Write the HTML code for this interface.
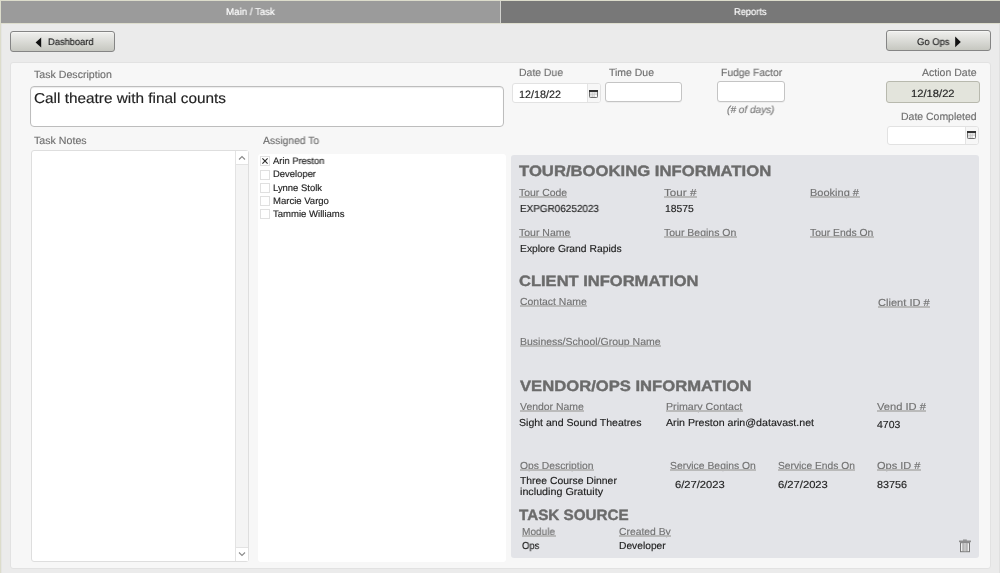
<!DOCTYPE html>
<html><head><meta charset="utf-8"><style>
html,body{margin:0;padding:0;width:1000px;height:573px;overflow:hidden;background:#ebebeb;}
body{position:relative;font-family:"Liberation Sans",sans-serif;}
.r{position:absolute;box-sizing:border-box;}
.t{position:absolute;white-space:nowrap;line-height:1;transform-origin:0 0;will-change:transform;text-rendering:geometricPrecision;}
.ul{position:absolute;height:2px;background:#bababa;}
</style></head><body>
<div class="r" style="left:0px;top:0px;width:1000px;height:573px;background:#ebebeb;"></div>
<div class="r" style="left:0px;top:0px;width:1000px;height:1px;background:#dcdccb;"></div>
<div class="r" style="left:0px;top:0px;width:1px;height:573px;background:#dcdccb;"></div>
<div class="r" style="left:1px;top:1px;width:499px;height:22px;background:#9b9b9b;"></div>
<div class="r" style="left:500px;top:1px;width:1px;height:22px;background:#d2d2ce;"></div>
<div class="r" style="left:501px;top:1px;width:499px;height:22px;background:#787878;"></div>
<div class="r" style="left:0px;top:23px;width:1000px;height:1px;background:#dedece;"></div>
<div class="r" style="left:999px;top:24px;width:1px;height:549px;background:#e0e0e0;"></div>
<div class="r" style="left:1px;top:24px;width:1px;height:549px;background:#e5e5e3;"></div>
<div class="t" id="t0" style="left:226.00px;top:7.91px;font-size:9.88px;color:#ffffff;-webkit-text-stroke:0.15px #ffffff;transform:scaleX(0.9825);">Main / Task</div>
<div class="t" id="t1" style="left:733.80px;top:7.91px;font-size:9.88px;color:#ffffff;-webkit-text-stroke:0.15px #ffffff;transform:scaleX(0.9415);">Reports</div>
<div class="r" style="left:10px;top:31px;width:105px;height:21px;background:linear-gradient(#f0f0ee,#c6c7c0);border:1px solid #858585;border-radius:3px;box-sizing:border-box;box-shadow:inset 0 1px 0 #f6f6f4;"></div>
<div class="r" style="left:886px;top:30px;width:105px;height:21px;background:linear-gradient(#f0f0ee,#c6c7c0);border:1px solid #858585;border-radius:3px;box-sizing:border-box;box-shadow:inset 0 1px 0 #f6f6f4;"></div>
<div class="t" id="t2" style="left:47.60px;top:38.13px;font-size:9.59px;color:#222;-webkit-text-stroke:0.15px #222;transform:scaleX(0.9728);">Dashboard</div>
<div class="t" id="t3" style="left:917.00px;top:38.13px;font-size:9.59px;color:#222;-webkit-text-stroke:0.15px #222;transform:scaleX(0.9818);">Go Ops</div>
<svg class="r" style="left:35px;top:37px" width="7" height="11"><polygon points="6.2,0.6 6.2,10.6 0.6,5.6" fill="#111"/></svg>
<svg class="r" style="left:955px;top:36px" width="7" height="12"><polygon points="0.2,0.6 0.2,11.2 5.8,5.9" fill="#111"/></svg>
<div class="r" style="left:10px;top:62px;width:981px;height:507px;background:#f7f7f7;border:1px solid #e2e2e2;border-radius:3px;box-sizing:border-box;"></div>
<div class="t" id="t4" style="left:34.30px;top:70.87px;font-size:10.47px;color:#6f6f6f;-webkit-text-stroke:0.15px #6f6f6f;transform:scaleX(1.0137);">Task Description</div>
<div class="t" id="t5" style="left:34.30px;top:137.07px;font-size:10.47px;color:#6f6f6f;-webkit-text-stroke:0.15px #6f6f6f;transform:scaleX(1.0164);">Task Notes</div>
<div class="t" id="t6" style="left:262.60px;top:137.07px;font-size:10.47px;color:#6f6f6f;-webkit-text-stroke:0.15px #6f6f6f;transform:scaleX(0.9881);">Assigned To</div>
<div class="t" id="t7" style="left:518.60px;top:68.67px;font-size:10.47px;color:#6f6f6f;-webkit-text-stroke:0.15px #6f6f6f;transform:scaleX(0.9944);">Date Due</div>
<div class="t" id="t8" style="left:609.20px;top:68.67px;font-size:10.47px;color:#6f6f6f;-webkit-text-stroke:0.15px #6f6f6f;">Time Due</div>
<div class="t" id="t9" style="left:721.00px;top:68.67px;font-size:10.47px;color:#6f6f6f;-webkit-text-stroke:0.15px #6f6f6f;transform:scaleX(0.9831);">Fudge Factor</div>
<div class="t" id="t10" style="left:922.40px;top:69.27px;font-size:10.47px;color:#6f6f6f;-webkit-text-stroke:0.15px #6f6f6f;transform:scaleX(1.0069);">Action Date</div>
<div class="t" id="t11" style="left:901.20px;top:112.67px;font-size:10.47px;color:#6f6f6f;-webkit-text-stroke:0.15px #6f6f6f;">Date Completed</div>
<div class="t" id="t12" style="left:727.00px;top:105.89px;font-size:10.17px;color:#7a7a7a;font-style:italic;-webkit-text-stroke:0.15px #7a7a7a;transform:scaleX(0.9891);">(# of days)</div>
<div class="r" style="left:30px;top:86px;width:474px;height:41px;background:#fff;border:1px solid #bdbdbd;border-radius:4px;box-sizing:border-box;box-shadow:inset 0 1px 1px rgba(0,0,0,0.08);"></div>
<div class="t" id="t13" style="left:34.30px;top:91.77px;font-size:14.39px;color:#222;-webkit-text-stroke:0.15px #222;transform:scaleX(1.0678);">Call theatre with final counts</div>
<div class="r" style="left:512px;top:83px;width:89px;height:20px;background:#fff;border:1px solid #e2e2e2;border-radius:3px;box-sizing:border-box;overflow:hidden;"></div>
<div class="r" style="left:587px;top:84px;width:13px;height:18px;background:#f7f7f7;border-left:1px solid #e4e4e4;border-radius:0 2px 2px 0;"></div>
<div class="t" id="t14" style="left:519.00px;top:90.10px;font-size:10.61px;color:#222;-webkit-text-stroke:0.15px #222;transform:scaleX(1.0182);">12/18/22</div>
<div class="r" style="left:605px;top:82px;width:77px;height:20px;background:#fff;border:1px solid #c4c4c4;border-radius:3px;box-sizing:border-box;box-shadow:0 1px 0 rgba(0,0,0,0.04);"></div>
<div class="r" style="left:717px;top:81px;width:68px;height:21px;background:#fff;border:1px solid #c4c4c4;border-radius:3px;box-sizing:border-box;box-shadow:0 1px 0 rgba(0,0,0,0.04);"></div>
<div class="r" style="left:886px;top:81px;width:94px;height:22px;background:#e3e4dc;border:1px solid #b8b9ae;border-radius:3px;box-sizing:border-box;"></div>
<div class="t" id="t15" style="left:911.40px;top:90.07px;font-size:10.47px;color:#222;-webkit-text-stroke:0.15px #222;transform:scaleX(1.0699);">12/18/22</div>
<div class="r" style="left:887px;top:126px;width:92px;height:19px;background:#fff;border:1px solid #e2e2e2;border-radius:3px;box-sizing:border-box;"></div>
<div class="r" style="left:965px;top:127px;width:13px;height:17px;background:#f7f7f7;border-left:1px solid #e4e4e4;border-radius:0 2px 2px 0;"></div>
<svg class="r" style="left:589px;top:90px" width="9" height="8"><rect x="0.5" y="0.5" width="8" height="7" rx="0.8" fill="#e2e2e2" stroke="#6e6e6e" stroke-width="1"/><rect x="0" y="0" width="9" height="2" fill="#333"/><line x1="3.5" y1="2.5" x2="3.5" y2="7" stroke="#c6c6c6" stroke-width="0.6"/><line x1="5.5" y1="2.5" x2="5.5" y2="7" stroke="#c6c6c6" stroke-width="0.6"/><line x1="1" y1="4.5" x2="8" y2="4.5" stroke="#c6c6c6" stroke-width="0.6"/><rect x="5.8" y="4.8" width="2" height="2" fill="#fff"/></svg>
<svg class="r" style="left:967px;top:131px" width="9" height="8"><rect x="0.5" y="0.5" width="8" height="7" rx="0.8" fill="#e2e2e2" stroke="#6e6e6e" stroke-width="1"/><rect x="0" y="0" width="9" height="2" fill="#333"/><line x1="3.5" y1="2.5" x2="3.5" y2="7" stroke="#c6c6c6" stroke-width="0.6"/><line x1="5.5" y1="2.5" x2="5.5" y2="7" stroke="#c6c6c6" stroke-width="0.6"/><line x1="1" y1="4.5" x2="8" y2="4.5" stroke="#c6c6c6" stroke-width="0.6"/><rect x="5.8" y="4.8" width="2" height="2" fill="#fff"/></svg>
<div class="r" style="left:31px;top:150px;width:218px;height:412px;background:#fff;border:1px solid #dedede;border-radius:3px;box-sizing:border-box;"></div>
<div class="r" style="left:235px;top:151px;width:13px;height:410px;background:#f4f4f4;border-left:1px solid #e3e3e3;"></div>
<div class="r" style="left:236px;top:151px;width:12px;height:14px;background:#fff;border-bottom:1px solid #e3e3e3;"></div>
<div class="r" style="left:236px;top:547px;width:12px;height:14px;background:#fff;border-top:1px solid #e3e3e3;"></div>
<svg class="r" style="left:238px;top:155px" width="8" height="6"><polyline points="1,4.5 4,1.5 7,4.5" fill="none" stroke="#8a8a8a" stroke-width="1.1"/></svg>
<svg class="r" style="left:238px;top:551px" width="8" height="6"><polyline points="1,1.5 4,4.5 7,1.5" fill="none" stroke="#8a8a8a" stroke-width="1.1"/></svg>
<div class="r" style="left:258px;top:154px;width:248px;height:408px;background:#fff;border-radius:3px;"></div>
<div class="r" style="left:260px;top:156px;width:10px;height:10px;border:1px solid #e0e0e0;box-sizing:border-box;background:#fff;"></div>
<div class="t" id="t16" style="left:273.00px;top:156.91px;font-size:9.45px;color:#222;-webkit-text-stroke:0.15px #222;transform:scaleX(0.9885);">Arin Preston</div>
<div class="r" style="left:260px;top:170px;width:10px;height:10px;border:1px solid #e0e0e0;box-sizing:border-box;background:#fff;"></div>
<div class="t" id="t17" style="left:273.00px;top:169.51px;font-size:9.45px;color:#222;-webkit-text-stroke:0.15px #222;transform:scaleX(0.9948);">Developer</div>
<div class="r" style="left:260px;top:183px;width:10px;height:10px;border:1px solid #e0e0e0;box-sizing:border-box;background:#fff;"></div>
<div class="t" id="t18" style="left:273.00px;top:184.11px;font-size:9.45px;color:#222;-webkit-text-stroke:0.15px #222;">Lynne Stolk</div>
<div class="r" style="left:260px;top:196px;width:10px;height:10px;border:1px solid #e0e0e0;box-sizing:border-box;background:#fff;"></div>
<div class="t" id="t19" style="left:273.00px;top:196.70px;font-size:9.45px;color:#222;-webkit-text-stroke:0.15px #222;transform:scaleX(1.0090);">Marcie Vargo</div>
<div class="r" style="left:260px;top:209px;width:10px;height:10px;border:1px solid #e0e0e0;box-sizing:border-box;background:#fff;"></div>
<div class="t" id="t20" style="left:273.00px;top:210.31px;font-size:9.45px;color:#222;-webkit-text-stroke:0.15px #222;transform:scaleX(1.0116);">Tammie Williams</div>
<svg class="r" style="left:260px;top:156px" width="10" height="10"><path d="M2.4,2.3 L7.6,7.7 M7.6,2.3 L2.4,7.7" stroke="#2a2a2a" stroke-width="1.05"/></svg>
<div class="r" style="left:511px;top:155px;width:468px;height:403px;background:#e3e4e8;border-radius:3px;"></div>
<div class="t" id="t21" style="left:519.00px;top:165.00px;font-size:14.97px;color:#6b6b6b;font-weight:bold;-webkit-text-stroke:0.4px #6b6b6b;transform:scaleX(1.1135);">TOUR/BOOKING INFORMATION</div>
<div class="t" id="t22" style="left:518.70px;top:189.09px;font-size:10.17px;color:#727272;-webkit-text-stroke:0.15px #727272;transform:scaleX(1.0277);">Tour Code</div>
<div class="ul" style="left:518.7px;top:196px;width:48.8px;"></div>
<div class="t" id="t23" style="left:664.30px;top:189.09px;font-size:10.17px;color:#727272;-webkit-text-stroke:0.15px #727272;transform:scaleX(1.1469);">Tour #</div>
<div class="ul" style="left:664.3px;top:196px;width:32.9px;"></div>
<div class="t" id="t24" style="left:810.00px;top:189.09px;font-size:10.17px;color:#727272;-webkit-text-stroke:0.15px #727272;transform:scaleX(1.0829);">Booking #</div>
<div class="ul" style="left:810.0px;top:196px;width:49.5px;"></div>
<div class="t" id="t25" style="left:519.70px;top:204.89px;font-size:10.17px;color:#222;-webkit-text-stroke:0.15px #222;transform:scaleX(0.9781);">EXPGR06252023</div>
<div class="t" id="t26" style="left:664.70px;top:205.29px;font-size:10.17px;color:#222;-webkit-text-stroke:0.15px #222;transform:scaleX(1.0195);">18575</div>
<div class="t" id="t27" style="left:519.10px;top:229.09px;font-size:10.17px;color:#727272;-webkit-text-stroke:0.15px #727272;transform:scaleX(1.0332);">Tour Name</div>
<div class="ul" style="left:519.1px;top:236px;width:51.9px;"></div>
<div class="t" id="t28" style="left:664.40px;top:229.09px;font-size:10.17px;color:#727272;-webkit-text-stroke:0.15px #727272;transform:scaleX(1.0324);">Tour Begins On</div>
<div class="ul" style="left:664.4px;top:236px;width:72.9px;"></div>
<div class="t" id="t29" style="left:810.00px;top:229.09px;font-size:10.17px;color:#727272;-webkit-text-stroke:0.15px #727272;transform:scaleX(1.0201);">Tour Ends On</div>
<div class="ul" style="left:810.0px;top:236px;width:64.0px;"></div>
<div class="t" id="t30" style="left:519.50px;top:245.09px;font-size:10.17px;color:#222;-webkit-text-stroke:0.15px #222;transform:scaleX(1.0167);">Explore Grand Rapids</div>
<div class="t" id="t31" style="left:519.00px;top:275.20px;font-size:14.97px;color:#6b6b6b;font-weight:bold;-webkit-text-stroke:0.4px #6b6b6b;transform:scaleX(1.1035);">CLIENT INFORMATION</div>
<div class="t" id="t32" style="left:519.60px;top:298.09px;font-size:10.17px;color:#727272;-webkit-text-stroke:0.15px #727272;transform:scaleX(1.0277);">Contact Name</div>
<div class="ul" style="left:519.6px;top:305px;width:67.3px;"></div>
<div class="t" id="t33" style="left:877.80px;top:299.09px;font-size:10.17px;color:#727272;-webkit-text-stroke:0.15px #727272;transform:scaleX(1.0905);">Client ID #</div>
<div class="ul" style="left:877.8px;top:306px;width:52.3px;"></div>
<div class="t" id="t34" style="left:519.60px;top:338.29px;font-size:10.17px;color:#727272;-webkit-text-stroke:0.15px #727272;transform:scaleX(1.0334);">Business/School/Group Name</div>
<div class="ul" style="left:519.6px;top:345px;width:141.3px;"></div>
<div class="t" id="t35" style="left:519.60px;top:380.00px;font-size:14.97px;color:#6b6b6b;font-weight:bold;-webkit-text-stroke:0.4px #6b6b6b;transform:scaleX(1.1108);">VENDOR/OPS INFORMATION</div>
<div class="t" id="t36" style="left:519.60px;top:403.09px;font-size:10.17px;color:#727272;-webkit-text-stroke:0.15px #727272;transform:scaleX(1.0281);">Vendor Name</div>
<div class="ul" style="left:519.6px;top:410px;width:64.5px;"></div>
<div class="t" id="t37" style="left:665.90px;top:403.09px;font-size:10.17px;color:#727272;-webkit-text-stroke:0.15px #727272;transform:scaleX(1.0470);">Primary Contact</div>
<div class="ul" style="left:665.9px;top:410px;width:76.8px;"></div>
<div class="t" id="t38" style="left:876.70px;top:403.09px;font-size:10.17px;color:#727272;-webkit-text-stroke:0.15px #727272;transform:scaleX(1.0980);">Vend ID #</div>
<div class="ul" style="left:876.7px;top:410px;width:49.5px;"></div>
<div class="t" id="t39" style="left:519.00px;top:419.29px;font-size:10.17px;color:#222;-webkit-text-stroke:0.15px #222;transform:scaleX(1.0390);">Sight and Sound Theatres</div>
<div class="t" id="t40" style="left:666.00px;top:419.09px;font-size:10.17px;color:#222;-webkit-text-stroke:0.15px #222;transform:scaleX(1.0481);">Arin Preston arin@datavast.net</div>
<div class="t" id="t41" style="left:876.70px;top:421.09px;font-size:10.17px;color:#222;-webkit-text-stroke:0.15px #222;transform:scaleX(1.0298);">4703</div>
<div class="t" id="t42" style="left:519.90px;top:462.09px;font-size:10.17px;color:#727272;-webkit-text-stroke:0.15px #727272;transform:scaleX(1.0169);">Ops Description</div>
<div class="ul" style="left:519.9px;top:469px;width:74.1px;"></div>
<div class="t" id="t43" style="left:669.80px;top:462.09px;font-size:10.17px;color:#727272;-webkit-text-stroke:0.15px #727272;transform:scaleX(1.0208);">Service Begins On</div>
<div class="ul" style="left:669.8px;top:469px;width:86.5px;"></div>
<div class="t" id="t44" style="left:777.60px;top:462.09px;font-size:10.17px;color:#727272;-webkit-text-stroke:0.15px #727272;transform:scaleX(1.0095);">Service Ends On</div>
<div class="ul" style="left:777.6px;top:469px;width:77.6px;"></div>
<div class="t" id="t45" style="left:876.50px;top:462.09px;font-size:10.17px;color:#727272;-webkit-text-stroke:0.15px #727272;transform:scaleX(1.0841);">Ops ID #</div>
<div class="ul" style="left:876.5px;top:469px;width:44.0px;"></div>
<div class="t" id="t46" style="left:519.90px;top:477.29px;font-size:10.17px;color:#222;-webkit-text-stroke:0.15px #222;transform:scaleX(1.0211);">Three Course Dinner</div>
<div class="t" id="t47" style="left:519.60px;top:487.89px;font-size:10.17px;color:#222;-webkit-text-stroke:0.15px #222;transform:scaleX(1.0582);">including Gratuity</div>
<div class="t" id="t48" style="left:674.60px;top:480.69px;font-size:10.17px;color:#222;-webkit-text-stroke:0.15px #222;transform:scaleX(1.1006);">6/27/2023</div>
<div class="t" id="t49" style="left:777.60px;top:480.69px;font-size:10.17px;color:#222;-webkit-text-stroke:0.15px #222;transform:scaleX(1.1028);">6/27/2023</div>
<div class="t" id="t50" style="left:876.50px;top:480.69px;font-size:10.17px;color:#222;-webkit-text-stroke:0.15px #222;transform:scaleX(1.0619);">83756</div>
<div class="t" id="t51" style="left:519.00px;top:508.80px;font-size:14.97px;color:#6b6b6b;font-weight:bold;-webkit-text-stroke:0.4px #6b6b6b;transform:scaleX(1.0169);">TASK SOURCE</div>
<div class="t" id="t52" style="left:522.00px;top:528.49px;font-size:10.17px;color:#727272;-webkit-text-stroke:0.15px #727272;transform:scaleX(0.9888);">Module</div>
<div class="ul" style="left:522.0px;top:535px;width:33.5px;"></div>
<div class="t" id="t53" style="left:618.80px;top:528.49px;font-size:10.17px;color:#727272;-webkit-text-stroke:0.15px #727272;transform:scaleX(1.0182);">Created By</div>
<div class="ul" style="left:618.8px;top:535px;width:52.3px;"></div>
<div class="t" id="t54" style="left:522.00px;top:542.29px;font-size:10.17px;color:#222;-webkit-text-stroke:0.15px #222;transform:scaleX(0.9289);">Ops</div>
<div class="t" id="t55" style="left:618.80px;top:542.29px;font-size:10.17px;color:#222;-webkit-text-stroke:0.15px #222;transform:scaleX(1.0092);">Developer</div>
<svg class="r" style="left:959px;top:539px" width="12" height="14"><rect x="4" y="0.5" width="3.8" height="1.3" fill="#8a8a8a"/><rect x="0" y="1.5" width="12" height="1.7" fill="#8e8e8e"/><rect x="1.5" y="3.7" width="9" height="9" fill="#f0f0f0" stroke="#787878" stroke-width="1"/><rect x="3.6" y="4.2" width="0.9" height="8" fill="#7c7c7c"/><rect x="7.5" y="4.2" width="0.9" height="8" fill="#7c7c7c"/><rect x="5.2" y="4.2" width="1.6" height="8" fill="#bcbcbc"/></svg>
</body></html>
